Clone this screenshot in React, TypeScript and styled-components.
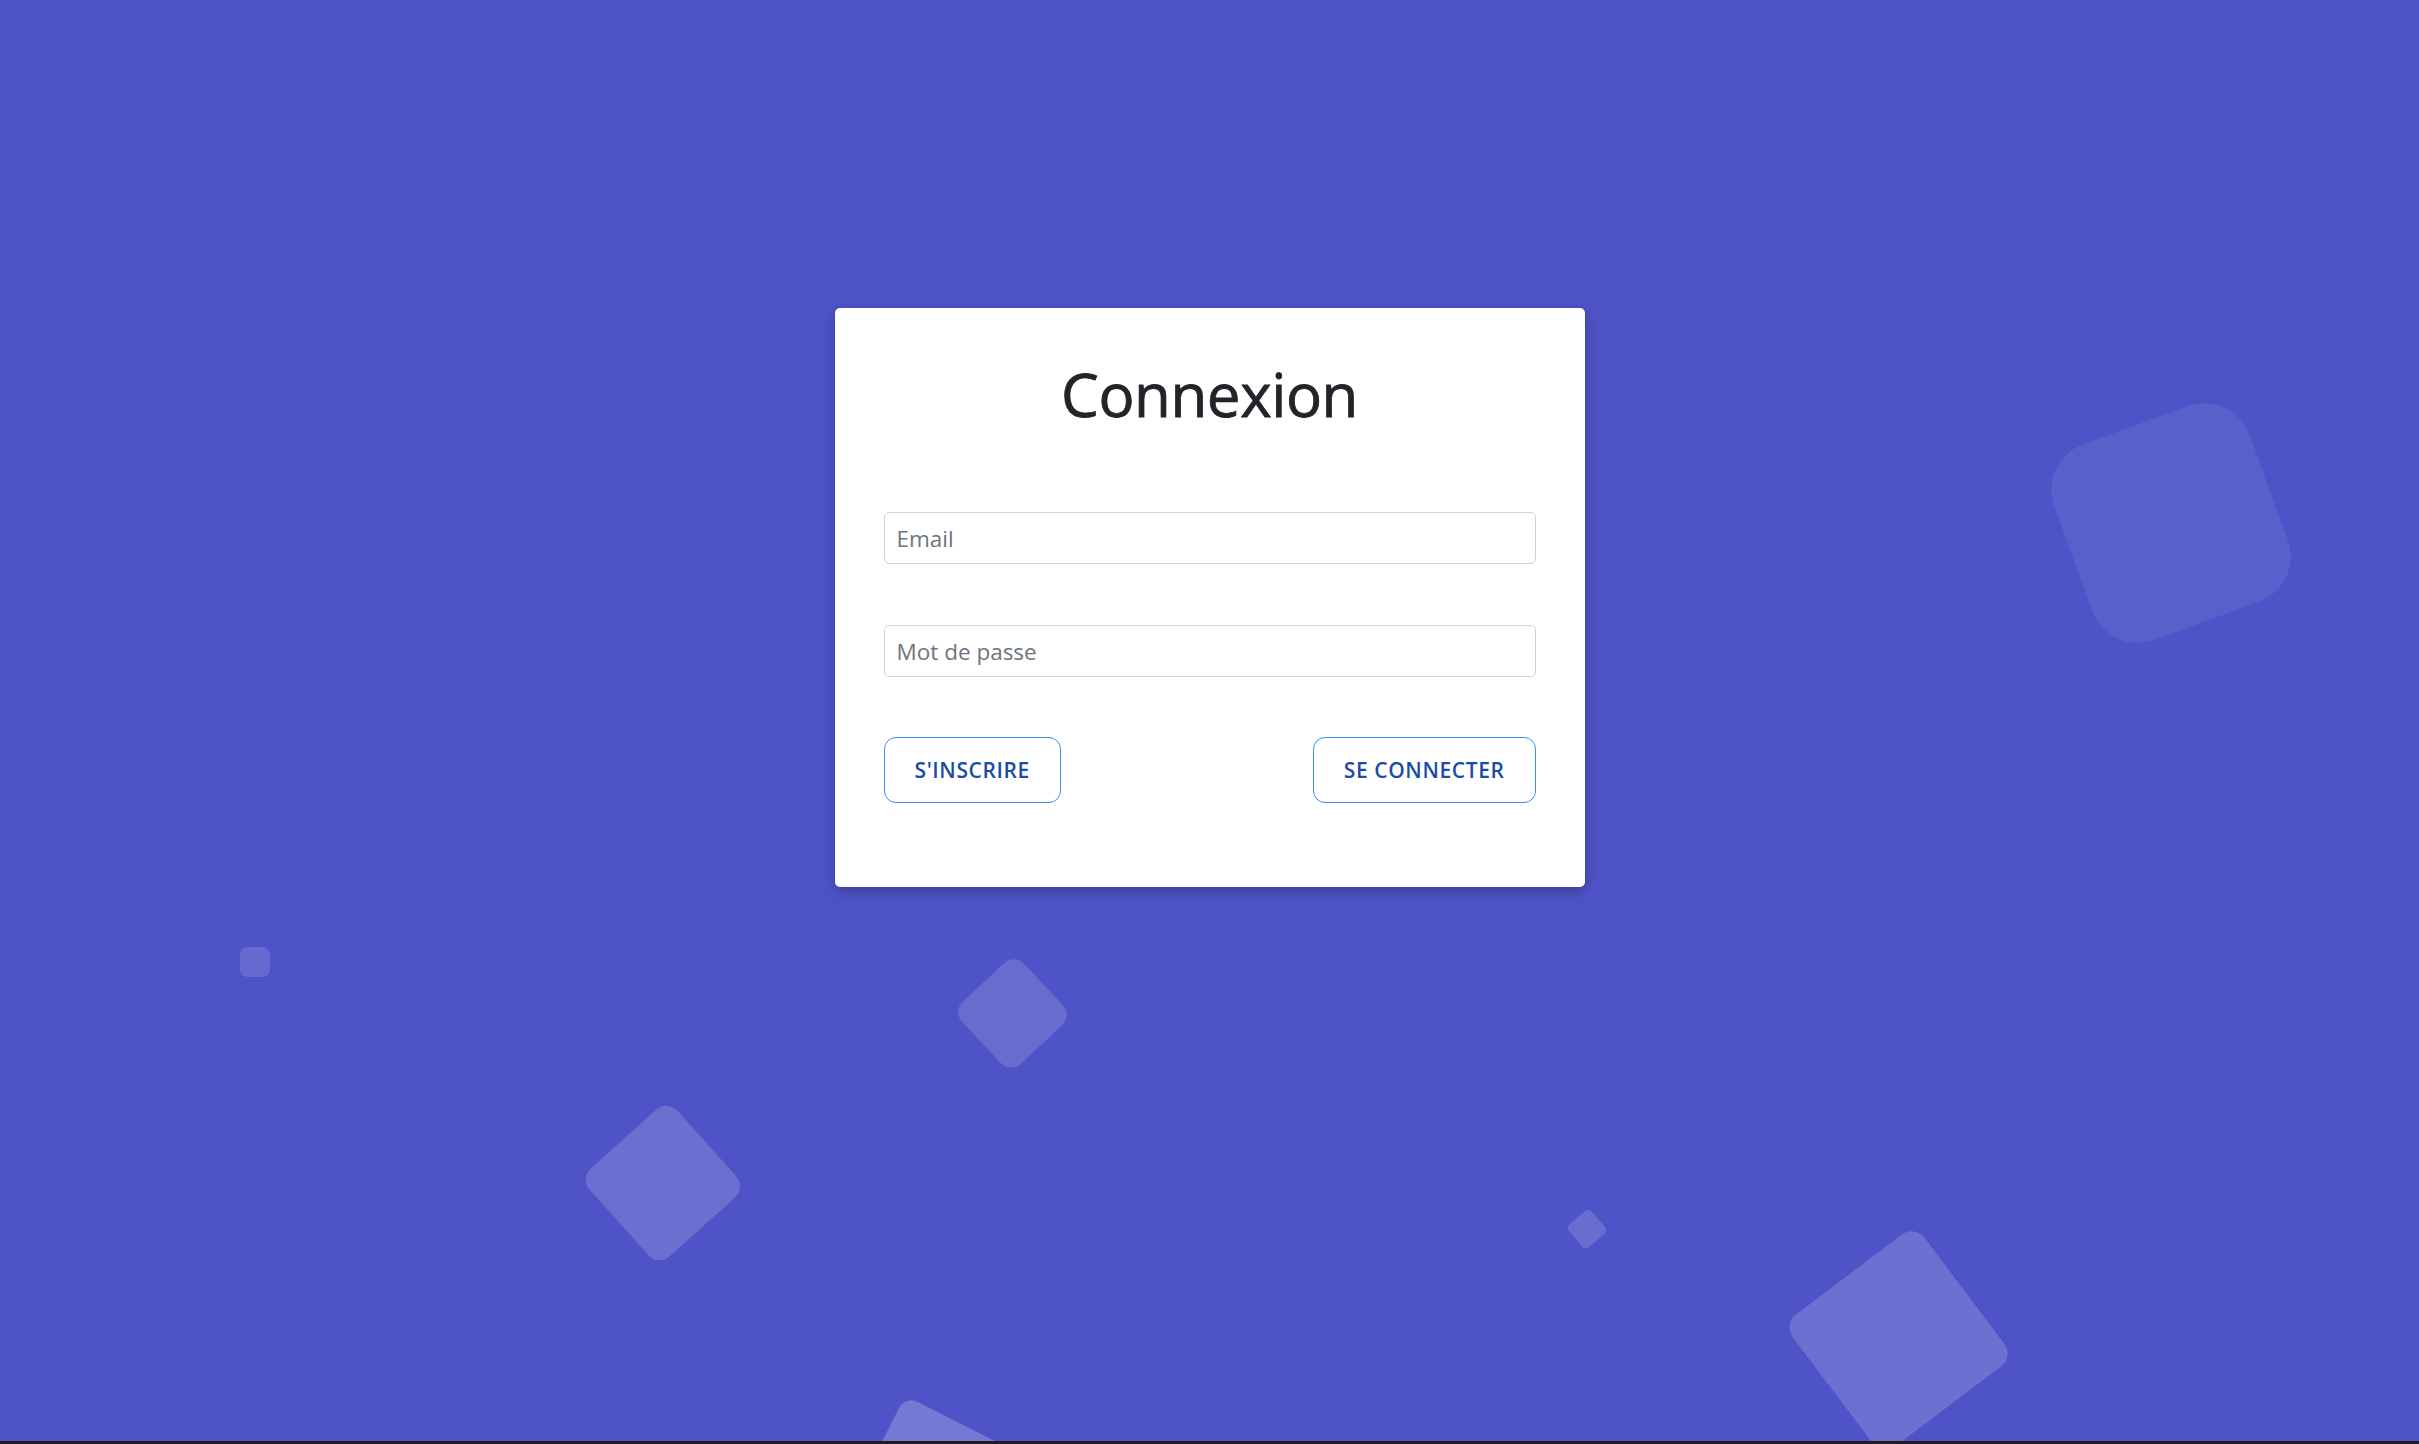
import React from "react";
import styled, { createGlobalStyle } from "styled-components";

const GlobalStyle = createGlobalStyle`
  html {
    background: #1c1c22;
  }
  body {
    margin: 0;
    font-family: "Open Sans", "Noto Sans", "Liberation Sans", sans-serif;
    color: #212529;
  }
  * {
    box-sizing: border-box;
  }
`;

const Area = styled.main`
  position: relative;
  height: calc(100vh - 3px);
  background: #4e54c8;
  overflow: hidden;
  display: flex;
  justify-content: center;
  align-items: flex-start;
  padding-top: 308px;
`;

const Shape = styled.span<{ $size: number; $radius: number; $alpha: number }>`
  position: absolute;
  display: block;
  width: ${(p) => p.$size}px;
  height: ${(p) => p.$size}px;
  border-radius: ${(p) => p.$radius}px;
  background: rgba(255, 255, 255, ${(p) => p.$alpha});
  pointer-events: none;
`;

const Card = styled.section`
  position: relative;
  z-index: 1;
  width: 750px;
  padding: 50px 49px 48px;
  background: #ffffff;
  border-radius: 5px;
  box-shadow: 0 4px 14px rgba(0, 0, 0, 0.28);
`;

const Title = styled.h1`
  margin: 0;
  font-size: 60px;
  line-height: 72px;
  font-weight: 400;
  letter-spacing: -0.4px;
  text-align: center;
  color: #212529;
  -webkit-text-stroke: 0.8px #212529;
`;

const Form = styled.form`
  display: flex;
  flex-direction: column;
  margin-top: 82px;
`;

const Input = styled.input<{ $gap?: number }>`
  display: block;
  width: 100%;
  height: 52px;
  margin-top: ${(p) => p.$gap ?? 0}px;
  padding: 0 12px;
  font-family: inherit;
  font-size: 22.5px;
  color: #212529;
  background: #fff;
  border: 1px solid #ced4da;
  border-radius: 5px;
  outline: none;

  &::placeholder {
    color: #6c757d;
  }
`;

const ButtonRow = styled.div`
  display: flex;
  justify-content: space-between;
  align-items: center;
  margin-top: 60px;
  margin-bottom: 36px;
`;

const OutlineButton = styled.button`
  height: 66px;
  padding: 0 30px;
  font-family: inherit;
  font-size: 21px;
  font-weight: 600;
  letter-spacing: 0.6px;
  text-transform: uppercase;
  color: #1b4ca6;
  background: #fff;
  border: 1px solid #3a8cf0;
  border-radius: 12px;
  cursor: pointer;
`;

type ShapeSpec = {
  cx: number;
  cy: number;
  size: number;
  radius: number;
  rotate: number;
  alpha: number;
};

const shapes: ShapeSpec[] = [
  { cx: 2171, cy: 523, size: 208, radius: 48, rotate: -20, alpha: 0.065 },
  { cx: 255, cy: 962, size: 30, radius: 8, rotate: 0, alpha: 0.13 },
  { cx: 1012, cy: 1013, size: 85, radius: 14, rotate: 47, alpha: 0.14 },
  { cx: 663, cy: 1183, size: 118, radius: 15, rotate: 48, alpha: 0.16 },
  { cx: 1587, cy: 1229, size: 30, radius: 5, rotate: 50, alpha: 0.15 },
  { cx: 1898, cy: 1340, size: 165, radius: 16, rotate: 53, alpha: 0.17 },
  { cx: 941, cy: 1506, size: 165, radius: 14, rotate: 27, alpha: 0.22 },
];

export default function App() {
  return (
    <>
      <GlobalStyle />
      <Area>
        {shapes.map((s, i) => (
          <Shape
            key={i}
            $size={s.size}
            $radius={s.radius}
            $alpha={s.alpha}
            style={{
              left: s.cx - s.size / 2,
              top: s.cy - s.size / 2,
              transform: `rotate(${s.rotate}deg)`,
            }}
          />
        ))}
        <Card>
          <Title>Connexion</Title>
          <Form onSubmit={(e) => e.preventDefault()}>
            <Input type="email" placeholder="Email" />
            <Input type="password" placeholder="Mot de passe" $gap={61} />
            <ButtonRow>
              <OutlineButton type="button">S'inscrire</OutlineButton>
              <OutlineButton type="submit">Se connecter</OutlineButton>
            </ButtonRow>
          </Form>
        </Card>
      </Area>
    </>
  );
}
